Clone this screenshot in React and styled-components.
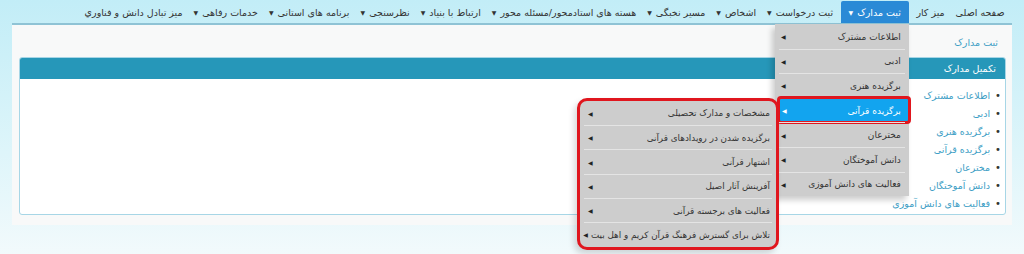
import React from 'react'
import styled, { createGlobalStyle } from 'styled-components'

const GlobalStyle = createGlobalStyle`
  html, body {
    margin: 0;
    padding: 0;
  }
  body {
    font-family: "DejaVu Sans", "Noto Sans", sans-serif;
    font-size: 9.5px;
    color: #333;
  }
`;

const Page = styled.div`
  width: 1024px;
  height: 254px;
  overflow: hidden;
  direction: rtl;
  background: linear-gradient(180deg, #c2edf7 0%, #def5fa 60%, #f2fafc 100%);
  padding: 0 12px;
  box-sizing: border-box;
`;

const Nav = styled.div`
  display: flex;
  align-items: flex-end;
  height: 25px;
  padding-right: 2px;
  border-bottom: 2px solid #8fc3d5;
  box-sizing: border-box;
`;

const NavItem = styled.div`
  position: relative;
  height: 22px;
  display: flex;
  align-items: center;
  gap: 4px;
  padding: 0 ${p => (p.$active ? '8px' : '5.5px')};
  margin: 0 ${p => (p.$active ? '2px' : '0')};
  white-space: nowrap;
  font-size: 9.5px;
  color: ${p => (p.$active ? '#fff' : '#333')};
  background: ${p => (p.$active ? '#2a8ad6' : 'transparent')};
  border-radius: 2px 2px 0 0;
`;

const Caret = styled.span`
  font-size: 6px;
`;

const Menu = styled.div`
  position: absolute;
  top: 100%;
  right: 0;
  margin-top: 1px;
  width: 134px;
  background: #cdcdcd;
  box-shadow: -3px 4px 6px rgba(0, 0, 0, 0.2);
  padding: 0 4px;
  box-sizing: border-box;
  z-index: 5;
`;

const SubMenu = styled.div`
  position: absolute;
  top: -1px;
  right: 100%;
  width: 202px;
  height: 152px;
  background-color: #cdcdcd;
  border: 3px solid #e0161e;
  border-radius: 10px;
  padding: 0 4px;
  box-sizing: border-box;
  box-shadow: -3px 4px 6px rgba(0, 0, 0, 0.15);
  z-index: 6;
  isolation: isolate;
`;

const MenuRow = styled.div`
  position: relative;
  height: ${p => (p.$sub ? '24.3px' : '24.6px')};
  display: flex;
  align-items: center;
  justify-content: space-between;
  gap: 3px;
  padding: 0 ${p => (p.$sub ? '2px 0 4px' : '4px 0 2px')};
  color: ${p => (p.$active ? '#fff' : '#333')};
  background: ${p => (p.$active ? '#12a4ef' : 'transparent')};
  border-top: 1px solid ${p => (p.$first ? 'transparent' : '#e4e4e4')};
  box-sizing: border-box;
  white-space: nowrap;
  font-size: ${p => (p.$sub ? '8.8px' : '9px')};
  ${p =>
    p.$active &&
    `
    margin-right: -4px;
    padding: 0 8px 0 3px;
    outline: 3px solid #e0161e;
    outline-offset: -1px;
    border-radius: 2px;
    border-top-color: transparent;
  `}
`;

const Arrow = styled.span`
  font-size: 6px;
  color: ${p => (p.$light ? '#fff' : '#222')};
`;

const Content = styled.div`
  background: #f8f9f9;
  height: 200px;
  padding: 11px 6px 0 7px;
  box-sizing: border-box;
`;

const Crumb = styled.div`
  color: #3d9ec5;
  font-size: 9.5px;
  line-height: 14px;
  padding-right: 8px;
  margin-bottom: 7px;
`;

const Panel = styled.div`
  border: 1px solid #a7d6e6;
  border-radius: 3px;
  background: #fff;
  height: 158px;
  box-sizing: border-box;
  overflow: hidden;
`;

const PanelHead = styled.div`
  background: #2697b9;
  color: #fff;
  height: 21px;
  line-height: 21px;
  padding-right: 9px;
  font-size: 9.5px;
`;

const List = styled.div`
  display: flex;
  flex-direction: column;
  padding: 8px 4px 0 0;
`;

const ListItem = styled.div`
  display: flex;
  align-items: center;
  gap: 5px;
  color: #3d9ec5;
  line-height: 18px;
  font-size: 9.5px;
  &::before {
    content: '•';
    color: #333;
    font-size: 10px;
  }
`;

const navItems = [
  { t: 'صفحه اصلی' },
  { t: 'میز کار' },
  { t: 'ثبت مدارک', c: true, active: true },
  { t: 'ثبت درخواست', c: true },
  { t: 'اشخاص', c: true },
  { t: 'مسیر نخبگی', c: true },
  { t: 'هسته های استادمحور/مسئله محور', c: true },
  { t: 'ارتباط با بنیاد', c: true },
  { t: 'نظرسنجی', c: true },
  { t: 'برنامه های استانی', c: true },
  { t: 'خدمات رفاهی', c: true },
  { t: 'میز تبادل دانش و فناوري' },
]

const menuItems = [
  'اطلاعات مشترک',
  'ادبی',
  'برگزیده هنری',
  'برگزیده قرآنی',
  'مخترعان',
  'دانش آموختگان',
  'فعالیت های دانش آموزی',
]

const subItems = [
  'مشخصات و مدارک تحصیلی',
  'برگزیده شدن در رویدادهای قرآنی',
  'اشتهار قرآنی',
  'آفرینش آثار اصیل',
  'فعالیت های برجسته قرآنی',
  'تلاش برای گسترش فرهنگ قرآن کریم و اهل بیت',
]

const DropMenu = () => (
  <Menu>
    {menuItems.map((m, i) => {
      const active = m === 'برگزیده قرآنی'
      return (
        <MenuRow key={m} $first={i === 0} $active={active}>
          <span>{m}</span>
          <Arrow $light={active}>◀</Arrow>
          {active && (
            <SubMenu>
              {subItems.map((s, j) => (
                <MenuRow key={s} $sub $first={j === 0}>
                  <span>{s}</span>
                  <Arrow>◀</Arrow>
                </MenuRow>
              ))}
            </SubMenu>
          )}
        </MenuRow>
      )
    })}
  </Menu>
)

const App = () => {
  return (
    <Page>
      <GlobalStyle />
      <Nav>
        {navItems.map(n => (
          <NavItem key={n.t} $active={n.active}>
            <span>{n.t}</span>
            {n.c && <Caret>▼</Caret>}
            {n.active && <DropMenu />}
          </NavItem>
        ))}
      </Nav>
      <Content>
        <Crumb>ثبت مدارک</Crumb>
        <Panel>
          <PanelHead>تکمیل مدارک</PanelHead>
          <List>
            {menuItems.map(m => (
              <ListItem key={m}>{m}</ListItem>
            ))}
          </List>
        </Panel>
      </Content>
    </Page>
  )
}

export default App
